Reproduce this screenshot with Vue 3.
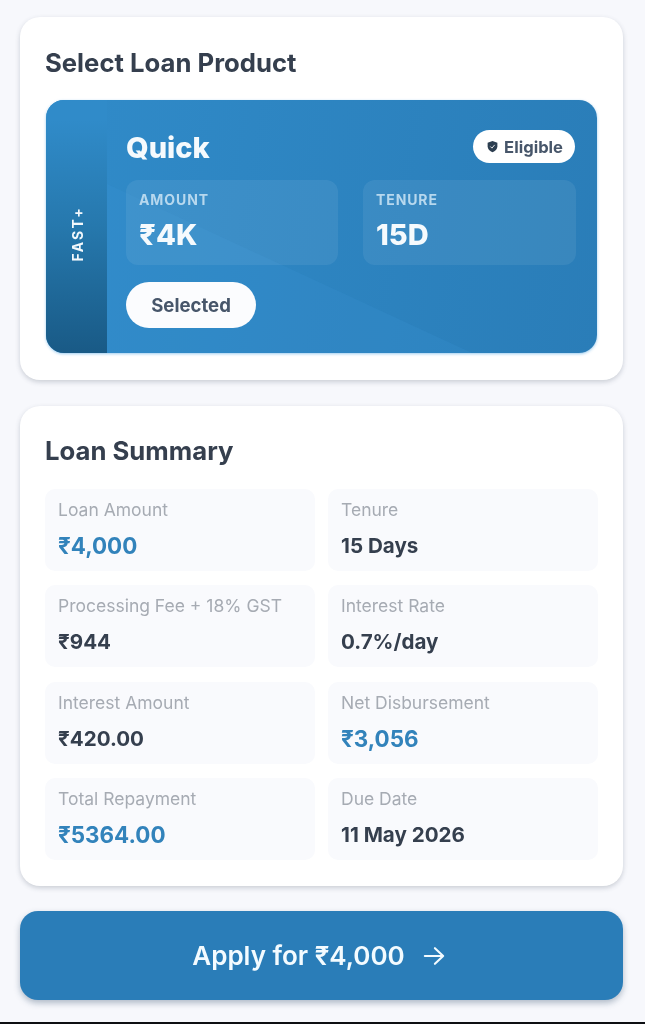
<script setup>
const rows = [
  { label: 'Loan Amount', value: '₹4,000', accent: true },
  { label: 'Tenure', value: '15 Days' },
  { label: 'Processing Fee + 18% GST', value: '₹944' },
  { label: 'Interest Rate', value: '0.7%/day' },
  { label: 'Interest Amount', value: '₹420.00' },
  { label: 'Net Disbursement', value: '₹3,056', accent: true },
  { label: 'Total Repayment', value: '₹5364.00', accent: true },
  { label: 'Due Date', value: '11 May 2026' },
]
</script>

<template>
  <div class="page">
    <section class="card first">
      <h2 class="heading">Select Loan Product</h2>
      <div class="product">
        <div class="strip"><span class="strip-text">FAST+</span></div>
        <div class="body">
          <svg class="sheen" viewBox="0 0 490 253" preserveAspectRatio="none" aria-hidden="true">
            <path d="M0 84 L365 253 L0 253 Z" fill="#3a96d6" opacity="0.2" />
          </svg>
          <div class="top">
            <span class="name">Quick</span>
            <span class="badge">
              <svg class="shield" viewBox="0 0 24 24" aria-hidden="true">
                <path d="M12 2 L21 5 V11.5 C21 17 17 20.8 12 22.5 C7 20.8 3 17 3 11.5 V5 Z" fill="#2c3e50" />
                <path d="M8 12 l3 3 l5 -6" fill="none" stroke="#fff" stroke-width="1.6" />
              </svg>
              Eligible
            </span>
          </div>
          <div class="stats">
            <div class="stat"><div class="stat-label">AMOUNT</div><div class="stat-value">₹4K</div></div>
            <div class="stat"><div class="stat-label">TENURE</div><div class="stat-value">15D</div></div>
          </div>
          <span class="selected">Selected</span>
        </div>
      </div>
    </section>

    <section class="card second">
      <h2 class="heading">Loan Summary</h2>
      <div class="grid">
        <div v-for="r in rows" :key="r.label" class="cell">
          <div class="cell-label">{{ r.label }}</div>
          <div class="cell-value" :class="{ accent: r.accent }">{{ r.value }}</div>
        </div>
      </div>
    </section>

    <button class="apply">
      <span>Apply for ₹4,000</span>
      <svg class="arrow" viewBox="0 0 24 24" aria-hidden="true">
        <path d="M2 12 H22 M13 3.5 L22 12 L13 20.5" fill="none" stroke="currentColor" stroke-width="2.3" stroke-linecap="round" stroke-linejoin="round" />
      </svg>
    </button>
    <div class="footer"></div>
  </div>
</template>

<style>
html, body { margin: 0; background: #f7f8fc; }
</style>

<style scoped>
.page {
  width: 645px;
  height: 1024px;
  box-sizing: border-box;
  padding: 17px 22px 0 20px;
  background: #f7f8fc;
  font-family: Inter, "Noto Sans", sans-serif;
  display: flex;
  flex-direction: column;
  position: relative;
  overflow: hidden;
  filter: blur(0.5px);
}
.card {
  background: #fff;
  border-radius: 20px;
  box-shadow: 0 2px 5px rgba(60, 70, 90, 0.24);
  padding: 0 26px;
  box-sizing: border-box;
}
.first { height: 363px; padding-top: 31px; }
.second { height: 480px; margin-top: 26px; padding-top: 30px; padding-left: 25px; }
.heading {
  margin: 0 0 0 -1px;
  font-size: 25.7px;
  line-height: 30px;
  font-weight: 700;
  color: #353f4e;
}
.second .heading { margin-left: 0; }
.product {
  margin-top: 22px;
  height: 253px;
  border-radius: 18px;
  overflow: hidden;
  display: flex;
  background: linear-gradient(100deg, #308bc9, #2a7db8);
  box-shadow: 0 1px 3px rgba(90, 170, 230, 0.6);
}
.strip {
  width: 61px;
  flex: none;
  background: linear-gradient(180deg, #308bc9 8%, #2678ad 50%, #195a86 100%);
  display: flex;
  align-items: center;
  justify-content: center;
}
.strip-text {
  writing-mode: vertical-rl;
  transform: rotate(180deg);
  color: #f3f8fc;
  font-size: 14px;
  font-weight: 700;
  letter-spacing: 2.2px;
  margin-top: 14px;
  margin-left: 2px;
}
.body {
  flex: 1;
  padding: 30px 22px 0 19px;
  position: relative;
  min-width: 0;
}
.sheen {
  position: absolute;
  inset: 0;
  width: 100%;
  height: 100%;
}
.top, .stats, .selected { position: relative; }
.top {
  display: flex;
  align-items: center;
  justify-content: space-between;
  height: 33px;
}
.name {
  font-size: 29px;
  font-weight: 800;
  color: #f5fafd;
  padding-top: 2px;
}
.badge {
  display: inline-flex;
  align-items: center;
  gap: 5px;
  height: 33px;
  padding: 0 12px 0 13px;
  box-sizing: border-box;
  background: #fff;
  border-radius: 17px;
  font-size: 16.6px;
  font-weight: 700;
  color: #47566a;
}
.shield { width: 13px; height: 13px; }
.stats {
  display: grid;
  grid-template-columns: 212px 213px;
  gap: 25px;
  margin-top: 17px;
}
.stat {
  height: 85px;
  box-sizing: border-box;
  border-radius: 12px;
  background: rgba(255, 255, 255, 0.07);
  padding: 12px 13px 0;
}
.stat-label {
  font-size: 14px;
  line-height: 16px;
  font-weight: 700;
  letter-spacing: 0.9px;
  color: #b7d8ee;
}
.stat-value {
  font-size: 29px;
  line-height: 34px;
  font-weight: 800;
  color: #f5fafd;
  margin-top: 10px;
}
.selected {
  display: flex;
  align-items: center;
  justify-content: center;
  width: 130px;
  height: 46px;
  margin-top: 17px;
  border-radius: 23px;
  background: #fbfcfe;
  color: #47566a;
  font-size: 18.6px;
  font-weight: 700;
}
.grid {
  margin-top: 23px;
  display: grid;
  grid-template-columns: 270px 270px;
  grid-auto-rows: 82px;
  column-gap: 13px;
  row-gap: 14.3px;
}
.cell {
  background: #f9fafd;
  border-radius: 10px;
  padding: 11px 13px 0;
  box-sizing: border-box;
}
.cell-label {
  font-size: 17.5px;
  line-height: 20px;
  color: #a6abb3;
}
.cell-value {
  font-size: 20.6px;
  line-height: 28px;
  font-weight: 700;
  color: #353f4e;
  margin-top: 12px;
}
.accent { color: #3283bb; font-size: 22.4px; }
.apply {
  margin-top: 25px;
  height: 89px;
  width: 603px;
  flex: none;
  border: none;
  border-radius: 18px;
  background: #2a7db8;
  box-shadow: 0 3px 6px rgba(40, 70, 100, 0.35);
  color: #f3fbff;
  font-family: inherit;
  font-size: 26px;
  font-weight: 600;
  display: flex;
  align-items: center;
  justify-content: center;
  gap: 18px;
  padding: 0 6px 0 0;
}
.arrow { width: 22px; height: 22px; }
.footer {
  position: absolute;
  left: 0;
  right: 0;
  bottom: 0;
  height: 2px;
  background: #0d0f12;
}
</style>
